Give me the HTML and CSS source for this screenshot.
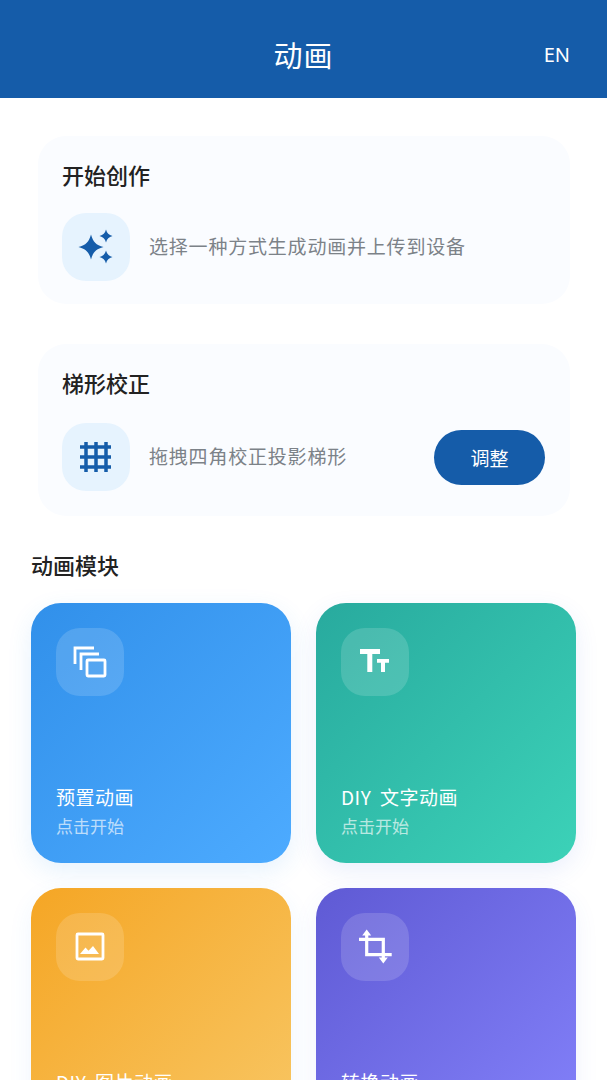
FILE: index.html
```html
<!DOCTYPE html>
<html lang="zh">
  <head>
    <meta charset="utf-8">
    <title>动画</title>
    <link rel="stylesheet" href="styles.css">
  </head>
  <body>
    <header class="topbar">
      <span class="topbar-side"></span>
      <h1>动画</h1>
      <span class="topbar-side lang">EN</span>
    </header>

    <main>
      <section class="panel">
        <h2>开始创作</h2>
        <div class="row">
          <div class="tile">
            <svg viewBox="0 0 68 68">
              <path class="fill" d="M29 21.500c2 7.500 5 10.500 12.500 12.500-7.500 2-10.500 5-12.500 12.500-2-7.500-5-10.500-12.500-12.500 7.500-2 10.500-5 12.500-12.500z"/>
              <path class="fill" d="M44 16.500c1 3.700 2.800 5.500 6.500 6.500-3.700 1-5.500 2.800-6.500 6.500-1-3.700-2.800-5.500-6.500-6.500 3.700-1 5.500-2.800 6.500-6.500z"/>
              <path class="fill" d="M44 37.500c1 3.700 2.800 5.500 6.500 6.500-3.700 1-5.500 2.800-6.500 6.500-1-3.700-2.800-5.500-6.500-6.500 3.700-1 5.500-2.800 6.500-6.500z"/>
            </svg>
          </div>
          <p>选择一种方式生成动画并上传到设备</p>
        </div>
      </section>

      <section class="panel panel-second">
        <h2>梯形校正</h2>
        <div class="row">
          <div class="tile">
            <svg viewBox="0 0 68 68">
              <path class="line" d="M18 24h31M18 34h31M18 44h31M24 19v30M34 19v30M44 19v30"/>
            </svg>
          </div>
          <p>拖拽四角校正投影梯形</p>
          <button>调整</button>
        </div>
      </section>

      <h2 class="section-title">动画模块</h2>

      <div class="cards">
        <article class="card blue">
          <div class="tile">
            <svg viewBox="0 0 68 68">
              <path class="white" d="M19 36V20h19M25 42V26h18"/>
              <rect class="white" x="31" y="32" width="18" height="16" rx="1"/>
            </svg>
          </div>
          <div>
            <h3>预置动画</h3>
            <small>点击开始</small>
          </div>
        </article>

        <article class="card teal">
          <div class="tile">
            <svg viewBox="0 0 68 68">
              <path class="solid" d="M19 21h20v5h-7.700v18h-5V26H19z"/>
              <path class="solid" d="M36 31h12v3.700h-4V44h-4v-9.300h-4z"/>
            </svg>
          </div>
          <div>
            <h3>DIY 文字动画</h3>
            <small>点击开始</small>
          </div>
        </article>

        <article class="card orange">
          <div class="tile">
            <svg viewBox="0 0 68 68">
              <rect class="white" x="21" y="21" width="26" height="25" rx="1"/>
              <path class="solid" d="M24 41l5.500-6.500 3 3.200 4.500-4.700 6 8z"/>
            </svg>
          </div>
          <div>
            <h3>DIY 图片动画</h3>
            <small>点击开始</small>
          </div>
        </article>

        <article class="card purple">
          <div class="tile">
            <svg viewBox="0 0 68 68">
              <path class="white thick" d="M18 26.300h24.300V46M25.700 21v20.700h25"/>
              <path class="solid" d="M25.700 16.500l4.500 6h-9zM42.300 50.500l-4.500-6h9z"/>
            </svg>
          </div>
          <div>
            <h3>转换动画</h3>
            <small>点击开始</small>
          </div>
        </article>
      </div>
    </main>
  </body>
</html>
```

FILE: styles.css
```css
* {
  box-sizing: border-box;
}

html, body {
  height: 1080px;
  overflow: hidden;
}

body {
  margin: 0;
  background-color: #fff;
  font-family: "Noto Sans CJK SC", "Noto Sans", sans-serif;
  color: #222;
}

h1, h2, h3, p {
  margin: 0;
  font-weight: 400;
}

.topbar {
  display: flex;
  align-items: center;
  justify-content: space-between;
  height: 98px;
  padding: 10px 37px 0;
  background-color: #155ca9;
  color: #fff;
}

.topbar h1 {
  font-size: 29px;
  letter-spacing: 1px;
}

.topbar-side {
  width: 60px;
}

.lang {
  font-family: "Noto Sans", sans-serif;
  font-size: 20px;
  text-align: right;
}

main {
  padding: 38px 31px 0;
}

.panel {
  margin: 0 6px 40px 7px;
  padding: 24px 25px 23px 24px;
  border-radius: 28px;
  background-color: #fafcff;
}

.panel h2 {
  height: 34px;
  margin-bottom: 19px;
  font-size: 22px;
  font-weight: 500;
  line-height: 28px;
}

.panel-second {
  margin-bottom: 0;
  padding-bottom: 25px;
}

.panel-second h2 {
  margin-bottom: 21px;
}

.row {
  display: flex;
  align-items: center;
  gap: 19px;
}

.row p {
  flex: 1;
  padding-bottom: 4px;
  font-size: 19px;
  letter-spacing: 0.8px;
  color: #7c8288;
}

.tile {
  width: 68px;
  height: 68px;
  border-radius: 24px;
  background-color: #e6f3fe;
}

.tile svg {
  display: block;
  width: 68px;
  height: 68px;
}

.fill {
  fill: #155ca9;
}

.line {
  fill: none;
  stroke: #155ca9;
  stroke-width: 3.500;
}

.white {
  fill: none;
  stroke: #fff;
  stroke-width: 2.800;
}

.thick {
  stroke-width: 3.200;
}

.solid {
  fill: #fff;
}

button {
  width: 111px;
  height: 55px;
  border: 0;
  border-radius: 28px;
  background-color: #155ca9;
  color: #fff;
  font-family: inherit;
  font-size: 19px;
}

.section-title {
  height: 34px;
  margin: 34px 0 19px;
  font-size: 22px;
  font-weight: 500;
  line-height: 28px;
}

.cards {
  display: grid;
  grid-template-columns: 260px 260px;
  grid-auto-rows: 260px;
  gap: 25px;
}

.card {
  display: flex;
  flex-direction: column;
  justify-content: space-between;
  padding: 25px;
  border-radius: 30px;
  color: #fff;
}

.card .tile {
  background-color: rgba(255, 255, 255, 0.15);
}

.card h3 {
  margin-bottom: 3px;
  font-size: 19px;
  font-weight: 400;
  line-height: 28px;
  letter-spacing: 0.5px;
  word-spacing: 4px;
}

.card small {
  display: block;
  font-size: 17px;
  line-height: 24px;
  opacity: 0.65;
}

.blue {
  background: linear-gradient(135deg, #3190ea, #4dabff);
  box-shadow: 0 8px 24px rgba(51, 144, 236, 0.12);
}

.teal {
  background: linear-gradient(135deg, #28aa9e, #3cd2b8);
  box-shadow: 0 8px 24px rgba(60, 100, 230, 0.1);
}

.orange {
  background: linear-gradient(135deg, #f5a625, #f8c765);
  box-shadow: 0 8px 24px rgba(51, 144, 236, 0.08);
}

.purple {
  background: linear-gradient(135deg, #5f5ad4, #8482fb);
  box-shadow: 0 8px 24px rgba(60, 100, 230, 0.08);
}
```
